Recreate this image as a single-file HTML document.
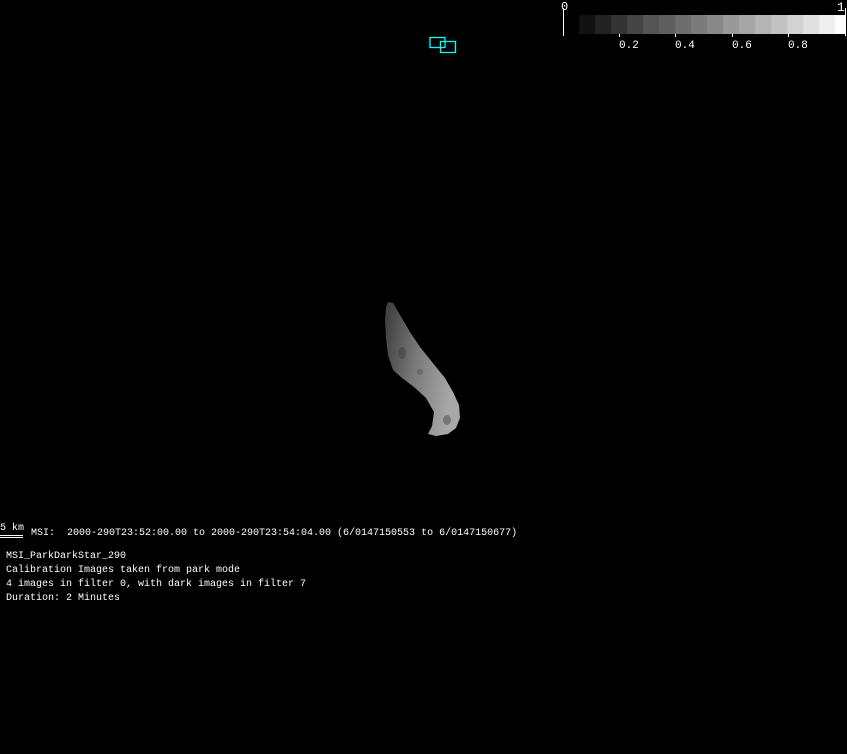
<!DOCTYPE html>
<html><head><meta charset="utf-8"><style>
html,body{margin:0;padding:0;background:#000;width:847px;height:754px;overflow:hidden}
svg{display:block}
text{font-family:"Liberation Mono","DejaVu Sans Mono",monospace;font-size:10px;fill:#fff}
</style></head><body>
<svg width="847" height="754" viewBox="0 0 847 754" xmlns="http://www.w3.org/2000/svg">
<rect width="847" height="754" fill="#000"/>
<g>
<rect x="579" y="15" width="16" height="19" fill="#111"/>
<rect x="595" y="15" width="16" height="19" fill="#222"/>
<rect x="611" y="15" width="16" height="19" fill="#333"/>
<rect x="627" y="15" width="16" height="19" fill="#444"/>
<rect x="643" y="15" width="16" height="19" fill="#555"/>
<rect x="659" y="15" width="16" height="19" fill="#5f5f5f"/>
<rect x="675" y="15" width="16" height="19" fill="#6e6e6e"/>
<rect x="691" y="15" width="16" height="19" fill="#7b7b7b"/>
<rect x="707" y="15" width="16" height="19" fill="#888"/>
<rect x="723" y="15" width="16" height="19" fill="#999"/>
<rect x="739" y="15" width="16" height="19" fill="#a6a6a6"/>
<rect x="755" y="15" width="16" height="19" fill="#b4b4b4"/>
<rect x="771" y="15" width="16" height="19" fill="#c2c2c2"/>
<rect x="787" y="15" width="16" height="19" fill="#d2d2d2"/>
<rect x="803" y="15" width="16" height="19" fill="#e0e0e0"/>
<rect x="819" y="15" width="16" height="19" fill="#efefef"/>
<rect x="835" y="15" width="11" height="19" fill="#fff"/>
<rect x="563" y="8" width="1" height="28" fill="#fff"/>
<rect x="845" y="8" width="1" height="28" fill="#fff"/>
<rect x="619" y="34" width="1" height="3" fill="#fff"/>
<rect x="675" y="34" width="1" height="3" fill="#fff"/>
<rect x="732" y="34" width="1" height="3" fill="#fff"/>
<rect x="788" y="34" width="1" height="3" fill="#fff"/>
<text x="561" y="10" style="font-size:12px">0</text>
<text x="837" y="11" style="font-size:13px">1</text>
<text x="619" y="48" style="font-size:11px">0.2</text>
<text x="675" y="48" style="font-size:11px">0.4</text>
<text x="732" y="48" style="font-size:11px">0.6</text>
<text x="788" y="48" style="font-size:11px">0.8</text>
</g>
<rect x="430" y="37.5" width="15" height="10" fill="none" stroke="#0ff" stroke-width="1.3"/>
<rect x="440.5" y="41.5" width="15" height="11" fill="none" stroke="#0ff" stroke-width="1.3"/>
<defs>
<linearGradient id="g" x1="0" y1="0" x2="1" y2="0.3">
<stop offset="0" stop-color="#3a3a3a"/>
<stop offset="0.5" stop-color="#7a7a7a"/>
<stop offset="1" stop-color="#a8a8a8"/>
</linearGradient>
</defs>
<path d="M388,302 L393,303 L400,315 L410,332 L420,347 L432,362 L445,378 L453,392 L459,405 L460,418 L456,428 L448,434 L436,436 L428,434 L432,426 L434,412 L426,398 L414,387 L402,378 L393,370 L388,355 L386,338 L385,320 L386,307 Z" fill="url(#g)"/>
<ellipse cx="402" cy="353" rx="4" ry="6" fill="#444" opacity="0.6"/>
<ellipse cx="447" cy="420" rx="4" ry="5" fill="#555" opacity="0.6"/>
<ellipse cx="420" cy="372" rx="3" ry="3" fill="#555" opacity="0.5"/>
<text x="0" y="530">5 km</text>
<rect x="0" y="535" width="23" height="1" fill="#fff"/>
<rect x="0" y="537" width="23" height="1" fill="#fff"/>
<text x="31" y="535" xml:space="preserve">MSI:  2000-290T23:52:00.00 to 2000-290T23:54:04.00 (6/0147150553 to 6/0147150677)</text>
<text x="6" y="558">MSI_ParkDarkStar_290</text>
<text x="6" y="572">Calibration Images taken from park mode</text>
<text x="6" y="586">4 images in filter 0, with dark images in filter 7</text>
<text x="6" y="600">Duration: 2 Minutes</text>
</svg>
</body></html>
